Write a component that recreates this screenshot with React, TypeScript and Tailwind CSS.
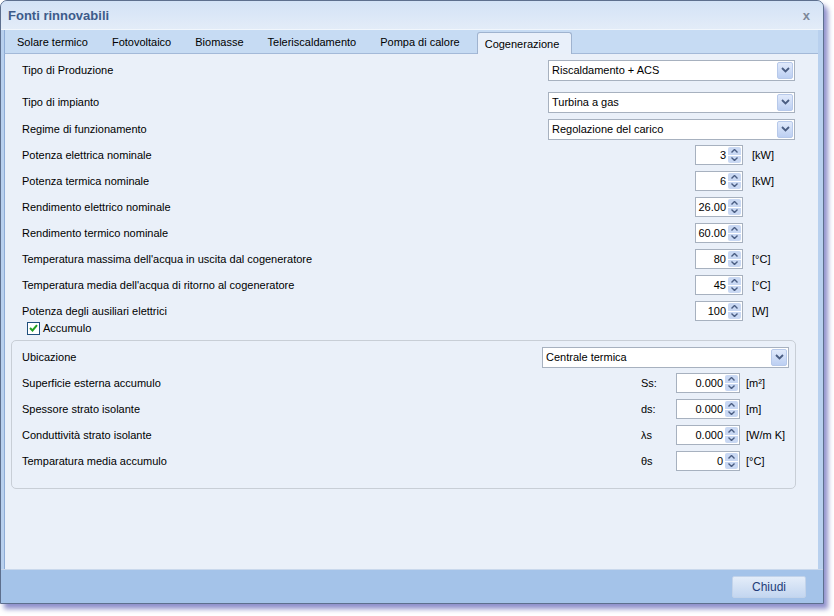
import React from "react";

const Chevron = () => (
  <svg width="9" height="6" viewBox="0 0 9 6">
    <path d="M1 1 L4.5 4.5 L8 1" fill="none" stroke="#4a5d82" strokeWidth="1.8" />
  </svg>
);

const Select = ({ value, w }: { value: string; w: string }) => (
  <div className={`flex h-[21px] items-center border border-[#a7b1bf] bg-white ${w}`}>
    <span className="flex-1 pl-[3px] whitespace-nowrap">{value}</span>
    <div className="mr-[1px] flex h-[17px] w-[16px] items-center justify-center rounded-[2px] border border-[#b7c9ea] bg-gradient-to-b from-[#e1eafb] to-[#bccff2]">
      <Chevron />
    </div>
  </div>
);

const Arrow = ({ up }: { up?: boolean }) => (
  <svg width="7" height="4" viewBox="0 0 7 4">
    <path d={up ? "M0.5 3.5 L3.5 0.5 L6.5 3.5" : "M0.5 0.5 L3.5 3.5 L6.5 0.5"} fill="none" stroke="#4a5d82" strokeWidth="1.4" />
  </svg>
);

const Spin = ({ value, w }: { value: string; w: string }) => (
  <div className={`flex h-[20px] items-center border border-[#a7b1bf] bg-white ${w}`}>
    <span className="flex-1 pr-[2px] text-right">{value}</span>
    <div className="mr-[1px] flex h-[16px] w-[13px] flex-col gap-[1px]">
      <div className="flex flex-1 items-center justify-center rounded-t-[2px] bg-[#c9d8f3]">
        <Arrow up />
      </div>
      <div className="flex flex-1 items-center justify-center rounded-b-[2px] bg-[#c9d8f3]">
        <Arrow />
      </div>
    </div>
  </div>
);

const SpinRow = ({ label, value, unit, w }: { label: string; value: string; unit?: string; w: string }) => (
  <div className="flex h-[26px] items-center">
    <span className="flex-1">{label}</span>
    <Spin value={value} w={w} />
    <span className="ml-[9px] w-[43px]">{unit ?? ""}</span>
  </div>
);

const GroupRow = ({ label, sym, value, unit }: { label: string; sym: string; value: string; unit: string }) => (
  <div className="flex h-[26px] items-center">
    <span className="flex-1">{label}</span>
    <span className="w-[35px]">{sym}</span>
    <Spin value={value} w="w-[64px]" />
    <span className="ml-[6px] w-[43px]">{unit}</span>
  </div>
);

const tabs = ["Solare termico", "Fotovoltaico", "Biomasse", "Teleriscaldamento", "Pompa di calore"];

export default function App() {
  return (
    <div
      className="h-[616px] w-[834px] bg-white text-[11px] text-black"
      style={{ fontFamily: '"Liberation Sans", Arial, sans-serif' }}
    >
      <div className="flex h-[604px] w-[824px] flex-col overflow-hidden rounded-t-[7px] border border-[#5d6f8e] bg-[#b8d0ee] shadow-[4px_5px_5px_rgba(70,72,170,0.6)]">
        {/* title bar */}
        <div className="flex h-[29px] items-center justify-between border-b border-[#f1f6fc] bg-gradient-to-b from-[#d3e2f6] to-[#e3ecf8] pl-[7px] pr-[13px] pt-[2px]">
          <span className="text-[13px] font-bold text-[#3d5b8a]">Fonti rinnovabili</span>
          <span className="text-[13px] font-bold text-[#7d8899]">x</span>
        </div>
        {/* body */}
        <div className="flex flex-1 flex-col pl-[3px] pr-[5px]">
          <div className="flex h-[24px] items-end border-b border-[#a3b9d8] border-l border-l-[#8eacd6] bg-[#c6dbf3]">
            {tabs.map((t) => (
              <div key={t} className="flex h-[22px] items-center px-[12px] pt-[1px]">
                {t}
              </div>
            ))}
            <div className="relative top-[1px] ml-[5px] flex h-[22px] items-center rounded-t-[3px] border border-b-0 border-[#9fb3cf] bg-[#e9f0fa] pl-[7px] pr-[12px] pt-[1px]">
              Cogenerazione
            </div>
          </div>
          <div className="flex flex-1 flex-col border-l border-[#8eacd6] bg-[#eaf0f9] pl-[17px] pr-[23px] pt-[3px]">
            <div className="flex h-[26px] items-center">
              <span className="flex-1">Tipo di Produzione</span>
              <Select value="Riscaldamento + ACS" w="w-[247px]" />
            </div>
            <div className="mt-[6px] flex h-[26px] items-center">
              <span className="flex-1">Tipo di impianto</span>
              <Select value="Turbina a gas" w="w-[247px]" />
            </div>
            <div className="mt-[1px] flex h-[26px] items-center">
              <span className="flex-1">Regime di funzionamento</span>
              <Select value="Regolazione del carico" w="w-[247px]" />
            </div>
            <SpinRow label="Potenza elettrica nominale" value="3" unit="[kW]" w="w-[48px]" />
            <SpinRow label="Potenza termica nominale" value="6" unit="[kW]" w="w-[48px]" />
            <SpinRow label="Rendimento elettrico nominale" value="26.00" w="w-[48px]" />
            <SpinRow label="Rendimento termico nominale" value="60.00" w="w-[48px]" />
            <SpinRow label="Temperatura massima dell'acqua in uscita dal cogeneratore" value="80" unit="[°C]" w="w-[48px]" />
            <SpinRow label="Temperatura media dell'acqua di ritorno al cogeneratore" value="45" unit="[°C]" w="w-[48px]" />
            <SpinRow label="Potenza degli ausiliari elettrici" value="100" unit="[W]" w="w-[48px]" />
            <div className="-mt-[3px] flex h-[14px] items-center pl-[5px]">
              <div className="flex h-[13px] w-[13px] items-center justify-center border border-[#1f4f7d] bg-white">
                <svg width="9" height="8" viewBox="0 0 9 8">
                  <path d="M1 4 L3.5 6.5 L8 1.2" fill="none" stroke="#22a022" strokeWidth="2" />
                </svg>
              </div>
              <span className="ml-[3px]">Accumulo</span>
            </div>
            <div className="-ml-[11px] mr-[-1px] mt-[5px] flex h-[149px] flex-col rounded-[5px] border border-[#c8ced6] pl-[10px] pr-[6px] pt-[3px]">
              <div className="flex h-[26px] items-center">
                <span className="flex-1">Ubicazione</span>
                <Select value="Centrale termica" w="w-[247px]" />
              </div>
              <GroupRow label="Superficie esterna accumulo" sym="Ss:" value="0.000" unit="[m²]" />
              <GroupRow label="Spessore strato isolante" sym="ds:" value="0.000" unit="[m]" />
              <GroupRow label="Conduttività strato isolante" sym="λs" value="0.000" unit="[W/m K]" />
              <GroupRow label="Temparatura media accumulo" sym="θs" value="0" unit="[°C]" />
            </div>
          </div>
        </div>
        {/* footer */}
        <div className="flex h-[34px] items-center justify-end border-t border-[#c9d8ec] bg-[#a4c3e9] pr-[17px]">
          <div className="flex h-[22px] w-[74px] items-center justify-center rounded-[2px] border border-[#c2d3ea] bg-gradient-to-b from-[#e4edf9] to-[#c3d6f0] text-[12px] text-[#1e3c78]">
            Chiudi
          </div>
        </div>
      </div>
    </div>
  );
}
